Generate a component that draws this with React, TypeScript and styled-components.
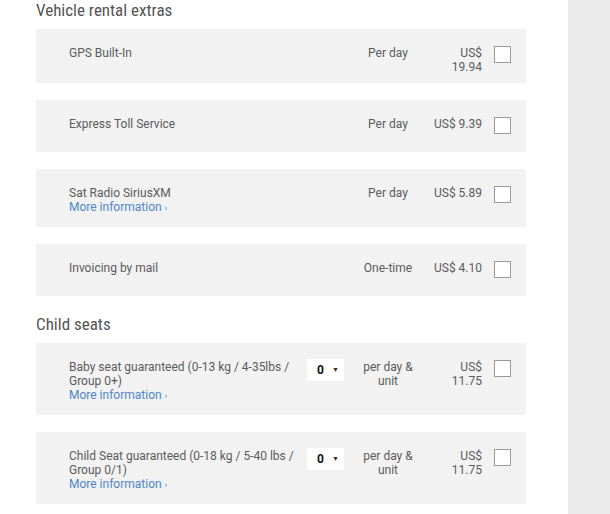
import React from "react";
import styled, { createGlobalStyle } from "styled-components";

const Global = createGlobalStyle`
  html, body { margin: 0; padding: 0; background: #fff; }
  body { font-family: Roboto, "Liberation Sans", Arial, sans-serif; }
`;

const Page = styled.div`
  display: flex;
  min-height: 514px;
`;

const Main = styled.main`
  width: 490px;
  padding: 0 42px 0 36px;
  background: #fff;
`;

const Aside = styled.aside`
  flex: 1;
  background: #ebebeb;
`;

const Section = styled.section<{ $first?: boolean }>`
  margin-top: ${(p) => (p.$first ? "0" : "18px")};
`;

const Heading = styled.h2`
  margin: 0 0 9px;
  font-family: "Roboto Condensed", Roboto, "Liberation Sans", sans-serif;
  font-stretch: condensed;
  font-weight: 400;
  font-size: 17px;
  line-height: 20px;
  color: #555;
`;

const List = styled.div`
  display: flex;
  flex-direction: column;
  gap: 17px;
`;

const Card = styled.div`
  display: grid;
  grid-template-columns: minmax(0, 1fr) 37px 64px 50px 17px;
  column-gap: 12px;
  align-items: start;
  min-height: 52px;
  box-sizing: border-box;
  padding: 17px 15px 9px 33px;
  background: #f2f2f2;
  font-size: 12px;
  line-height: 14px;
  color: #5b5b5b;
`;

const Name = styled.div``;

const Title = styled.div``;

const More = styled.a`
  display: block;
  padding-bottom: 3px;
  color: #4f86c9;
  text-decoration: none;
  span {
    font-size: 9px;
    margin-left: 3px;
  }
`;

const Qty = styled.div`
  margin-top: -1px;
  height: 22px;
  background: #fff;
  display: flex;
  align-items: center;
  padding-left: 10px;
  font-weight: 700;
  font-size: 12px;
  color: #111;
  span {
    font-size: 7px;
    font-weight: 400;
    margin-left: 8px;
    color: #333;
  }
`;

const Unit = styled.div`
  text-align: center;
`;

const Price = styled.div`
  text-align: right;
`;

const Check = styled.span`
  width: 17px;
  height: 17px;
  box-sizing: border-box;
  border: 1px solid #9a9a9a;
  background: #fff;
  display: block;
`;

type Extra = {
  name: string;
  more?: boolean;
  qty?: boolean;
  unit: string;
  price: string;
};

const vehicle: Extra[] = [
  { name: "GPS Built-In", unit: "Per day", price: "US$ 19.94" },
  { name: "Express Toll Service", unit: "Per day", price: "US$ 9.39" },
  { name: "Sat Radio SiriusXM", more: true, unit: "Per day", price: "US$ 5.89" },
  { name: "Invoicing by mail", unit: "One-time", price: "US$ 4.10" },
];

const seats: Extra[] = [
  {
    name: "Baby seat guaranteed (0-13 kg / 4-35lbs / Group 0+)",
    more: true,
    qty: true,
    unit: "per day & unit",
    price: "US$ 11.75",
  },
  {
    name: "Child Seat guaranteed (0-18 kg / 5-40 lbs / Group 0/1)",
    more: true,
    qty: true,
    unit: "per day & unit",
    price: "US$ 11.75",
  },
];

function Row({ e }: { e: Extra }) {
  return (
    <Card>
      <Name>
        <Title>{e.name}</Title>
        {e.more && (
          <More href="#">
            More information<span>›</span>
          </More>
        )}
      </Name>
      {e.qty ? (
        <Qty>
          0<span>▼</span>
        </Qty>
      ) : (
        <div />
      )}
      <Unit>{e.unit}</Unit>
      <Price>{e.price}</Price>
      <Check />
    </Card>
  );
}

export default function App() {
  return (
    <>
      <Global />
      <Page>
        <Main>
          <Section $first>
            <Heading>Vehicle rental extras</Heading>
            <List>
              {vehicle.map((e) => (
                <Row key={e.name} e={e} />
              ))}
            </List>
          </Section>
          <Section>
            <Heading>Child seats</Heading>
            <List>
              {seats.map((e) => (
                <Row key={e.name} e={e} />
              ))}
            </List>
          </Section>
        </Main>
        <Aside />
      </Page>
    </>
  );
}
